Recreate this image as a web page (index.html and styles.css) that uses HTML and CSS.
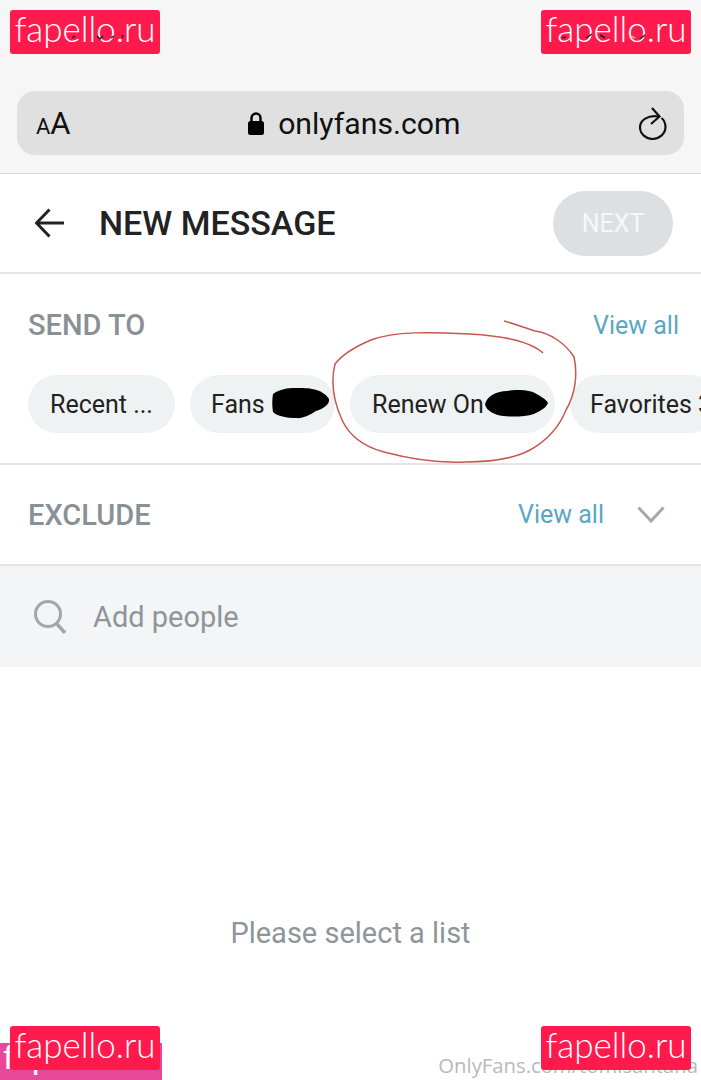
FILE: index.html
```html
<!DOCTYPE html>
<html lang="en">
<head>
<meta charset="UTF-8">
<meta name="viewport" content="width=device-width, initial-scale=1.0">
<title>New message</title>
<link rel="stylesheet" href="styles.css">
</head>
<body>
<div class="page">

  <div class="browser">
    <div class="urlbar">
      <span class="aa"><small>A</small>A</span>
      <span class="address">
        <svg class="lock" width="18" height="25" viewBox="0 0 18 25"><path d="M4.500 11V7a4.500 4.500 0 0 1 9 0v4" fill="none" stroke="#000" stroke-width="2.400"/><rect x="1" y="10" width="16" height="14" rx="2.500" fill="#000"/></svg>
        onlyfans.com
      </span>
      <svg class="reload" width="28" height="33" viewBox="0 0 28 33"><path d="M19 9.500C9 8 1 13 1 20.500C1 27 7 32 13.500 32C20 32 26.500 27 26.500 20C26.500 16 25 13 22.500 11" fill="none" stroke="#111" stroke-width="2.200"/><path d="M13 1l7.500 8.500-8.500 7.500" fill="none" stroke="#111" stroke-width="2.200"/></svg>
    </div>
  </div>

  <div class="header">
    <svg class="back" width="30" height="30" viewBox="0 0 30 30"><path d="M1.500 15H29M14.500 1.500L1.500 15l13 13.500" fill="none" stroke="#222" stroke-width="3"/></svg>
    <h1>NEW MESSAGE</h1>
    <button class="next">NEXT</button>
  </div>

  <div class="section sendto">
    <div class="row">
      <span class="label">SEND TO</span>
      <a class="link">View all</a>
    </div>
    <div class="chips">
      <span class="chip chip-recent">Recent ...</span>
      <span class="chip chip-fans">Fans
        <svg class="blot blot-fans" width="58" height="31" viewBox="0 0 58 31"><path d="M1 6C8 1 15 0 24 0C36 0 50 0 57 11C58 17 50 21 44 23C38 27 30 31 24 30C15 30 5 28 1 24C0 18 0 12 1 6Z" fill="#000"/></svg>
      </span>
      <span class="chip chip-renew">Renew On
        <svg class="blot blot-renew" width="64" height="27" viewBox="0 0 64 27"><path d="M0 14C2 6 12 1 22 1C32 -1 44 0 50 3C55 6 61 9 63 13C61 18 55 21 49 24C40 27 26 27 18 26C10 25 1 21 0 14Z" fill="#000"/></svg>
      </span>
      <span class="chip chip-fav">Favorites 3</span>
    </div>
  </div>

  <div class="section exclude">
    <span class="label">EXCLUDE</span>
    <a class="link">View all</a>
    <svg class="chevron" width="28" height="17" viewBox="0 0 28 17"><path d="M1.500 1.500L14 15 26.500 1.500" fill="none" stroke="#a4a8aa" stroke-width="3"/></svg>
  </div>

  <div class="search">
    <svg width="36" height="34" viewBox="0 0 36 34"><circle cx="15" cy="14" r="12.500" fill="none" stroke="#a3a7a9" stroke-width="3"/><path d="M24 24l8 9" stroke="#a3a7a9" stroke-width="3.500"/></svg>
    <span>Add people</span>
  </div>

  <div class="empty">Please select a list</div>

  <svg class="scribble" width="701" height="480" viewBox="0 0 701 480"><path d="M543 353C530 341 505 336 470 334C430 332 395 331 371 340C352 348 342 355 335 364C331 380 333 400 342 420C350 437 365 447 384 452C410 459 440 463 465 462C490 462 515 458 530 450C548 440 560 425 566 410C575 395 578 375 574 357C565 343 550 333 535 331C525 328 515 324 504 321" fill="none" stroke="#c8574e" stroke-width="1.500"/></svg>

  <div class="credit">OnlyFans.com/tomisantana</div>
  <div class="pinkbar">fapello.ru</div>
  <div class="mark mark-tl">fapello.ru</div>
  <div class="mark mark-tr">fapello.ru</div>
  <div class="mark mark-bl">fapello.ru</div>
  <div class="mark mark-br">fapello.ru</div>

  <!-- status bar bits showing through the top watermarks -->
  <svg class="scribble" width="701" height="60" viewBox="0 0 701 60"><path d="M72 38l3-2M97 36l3 3 3-3M111 38l3-2M122 35l1 3M562 38l4-1M586 38l6-4M600 35l5 3M640 39l5-4" fill="none" stroke="#222" stroke-width="1.500"/><path d="M631 36l4 2" stroke="#f0b040" stroke-width="1.500"/></svg>
</div>
</body>
</html>
```

FILE: styles.css
```css
* {
  box-sizing: border-box;
}
body {
  margin: 0;
  font-family: Roboto, "Liberation Sans", sans-serif;
  background: #fff;
}
.page {
  position: relative;
  width: 701px;
  height: 1080px;
  overflow: hidden;
}

/* safari bar */
.browser {
  height: 174px;
  padding: 91px 17px 0;
  background: #f6f6f6;
  border-bottom: 1px solid #d6d6d6;
}
.urlbar {
  position: relative;
  display: flex;
  align-items: center;
  justify-content: space-between;
  height: 64px;
  padding: 0 17px 0 19px;
  background: #e0e0e0;
  border-radius: 18px;
}
.aa {
  font-size: 31px;
  color: #111;
}
.aa small {
  font-size: 22px;
}
.address {
  display: flex;
  align-items: center;
  gap: 13px;
  margin-right: 2px;
  font-size: 30.200px;
  color: #111;
}
.reload {
  margin-top: 0;
}

/* header */
.header {
  display: flex;
  align-items: center;
  height: 100px;
  padding: 0 28px 0 35px;
  border-bottom: 2px solid #e3e5e6;
}
.back {
  margin-right: 34px;
}
.header h1 {
  flex: 1;
  margin: 0;
  font-size: 34px;
  font-weight: 500;
  color: #222;
}
.next {
  width: 120px;
  height: 65px;
  border: 0;
  border-radius: 33px;
  background: #dce0e2;
  color: #f6f8f8;
  font-family: inherit;
  font-size: 25px;
}

/* sections */
.section {
  border-bottom: 2px solid #e3e5e6;
}
.label {
  font-size: 29px;
  font-weight: 500;
  color: #8a9196;
}
.link {
  font-size: 25px;
  color: #5aa7c2;
}
.sendto {
  height: 191px;
  padding: 33px 0 0 28px;
}
.row {
  display: flex;
  justify-content: space-between;
  align-items: center;
  height: 36px;
  padding-right: 22px;
}
.chips {
  display: flex;
  gap: 15px;
  margin-top: 32px;
}
.chip {
  position: relative;
  flex: none;
  height: 58px;
  line-height: 60px;
  padding-left: 22px;
  border-radius: 29px;
  background: #eff2f3;
  font-size: 25px;
  color: #222;
}
.chip-recent {
  width: 147px;
}
.chip-fans {
  width: 145px;
  padding-left: 21px;
}
.chip-renew {
  width: 205px;
}
.chip-fav {
  width: 150px;
  padding-left: 20px;
  white-space: nowrap;
}
.blot {
  position: absolute;
}
.blot-fans {
  left: 82px;
  top: 13px;
}
.blot-renew {
  left: 135px;
  top: 15px;
}
.exclude {
  display: flex;
  align-items: center;
  height: 101px;
  padding: 0 36px 0 28px;
}
.exclude .label {
  flex: 1;
}
.chevron {
  margin-left: 33px;
}
.search {
  display: flex;
  align-items: center;
  gap: 24px;
  height: 101px;
  padding-left: 33px;
  background: #f4f5f7;
  font-size: 29px;
  color: #8f9598;
}
.empty {
  margin-top: 249px;
  text-align: center;
  font-size: 29px;
  color: #8f9598;
}

/* overlays */
.scribble {
  position: absolute;
  left: 0;
  top: 0;
}
.credit {
  position: absolute;
  right: 3px;
  top: 1051px;
  font-family: "Open Sans", sans-serif;
  font-size: 20.300px;
  color: #b9b9b9;
  white-space: nowrap;
}
.pinkbar {
  position: absolute;
  left: 0;
  top: 1043px;
  width: 162px;
  height: 37px;
  padding-left: 3px;
  background: #e8489a;
  color: #fff;
  font-family: Lato, sans-serif;
  font-size: 34px;
  line-height: 26px;
  overflow: hidden;
}
.mark {
  position: absolute;
  width: 150px;
  height: 44px;
  background: #ff1a4d;
  border-radius: 3px;
  color: #fff;
  font-family: Lato, sans-serif;
  font-size: 35px;
  font-weight: 300;
  line-height: 37px;
  text-align: center;
}
.mark-tl {
  left: 10px;
  top: 10px;
}
.mark-tr {
  left: 541px;
  top: 10px;
}
.mark-bl {
  left: 10px;
  top: 1026px;
}
.mark-br {
  left: 541px;
  top: 1026px;
}
```
